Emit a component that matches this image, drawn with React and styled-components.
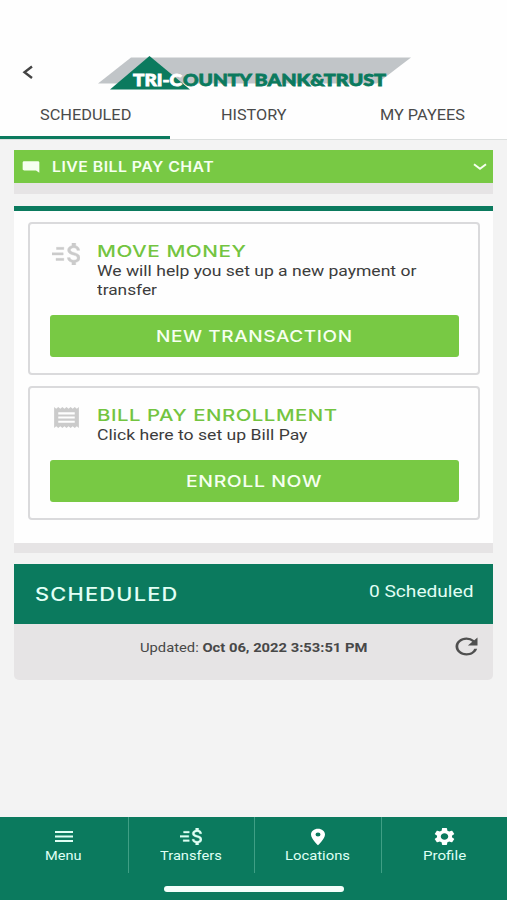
import React, { useLayoutEffect, useRef, useState } from 'react';
import styled, { createGlobalStyle } from 'styled-components';
import {
  MdModeComment,
  MdPlace,
  MdReceipt,
  MdRefresh,
  MdSettings,
} from 'react-icons/md';

const green = '#78c944';
const darkGreen = '#0b7a5e';
const grey = '#e6e4e5';

const GlobalStyle = createGlobalStyle`
  * {
    box-sizing: border-box;
  }

  body {
    margin: 0;
    background: #f3f3f3;
    color: #3c3c3c;
    font-family: Roboto, 'Liberation Sans', sans-serif;
  }
`;

const Screen = styled.div`
  display: flex;
  flex-direction: column;
  height: 900px;
  overflow: hidden;
`;

const WideBox = styled.span`
  display: block;
  flex: none;
  width: ${(props) => props.$width}px;
  text-align: left;
  white-space: nowrap;
`;

const WideInner = styled.span`
  display: inline-block;
  vertical-align: top;
  transform-origin: 0 50%;
`;

const IconBox = styled.span`
  display: block;
  flex: none;
  width: ${(props) => props.$width}px;
  height: ${(props) => props.$height}px;

  > svg {
    display: block;
    width: 100%;
    height: 100%;
  }
`;

const Header = styled.header`
  height: 140px;
  background: #fefefe;
  border-bottom: 1px solid #dcdfde;
`;

const TitleBar = styled.div`
  display: flex;
  height: 91px;
  padding: 55px 0 0 22px;
`;

const BackButton = styled.button`
  display: block;
  width: 76px;
  height: 34px;
  padding: 0;
  border: 0;
  background: none;
  text-align: left;
`;

const Tabs = styled.nav`
  display: grid;
  grid-template-columns: 170px 1fr 169px;
  height: 48px;
`;

const Tab = styled.a`
  display: flex;
  justify-content: center;
  padding-top: 14px;
  border-bottom: 3px solid
    ${(props) => (props.$active ? darkGreen : 'transparent')};
  font-size: 14px;
  line-height: 20px;
  color: #4a4a4a;
`;

const Content = styled.main`
  flex: 1;
  padding: 10px 14px 0;
`;

const ChatBar = styled.div`
  display: flex;
  align-items: center;
  height: 33px;
  padding: 0 6px 0 7px;
  background: ${green};
  color: #f6fff0;
  font-family: Inter, sans-serif;
  font-size: 14px;
  font-weight: 600;
  letter-spacing: 0.4px;
  line-height: 20px;
`;

const ChatLabel = styled.div`
  flex: 1;
  padding-left: 11px;
`;

const Strip = styled.div`
  height: ${(props) => props.$height}px;
  background: ${grey};
`;

const Panel = styled.section`
  margin-top: 12px;
  height: 337px;
  padding: 11px 13px 0 14px;
  border-top: 5px solid ${darkGreen};
  background: #fefefe;
`;

const Card = styled.article`
  height: ${(props) => props.$height}px;
  margin-bottom: 11px;
  padding: 17px 19.5px 0;
  border: 2px solid #dadadc;
  border-radius: 4px;
`;

const CardHead = styled.div`
  display: flex;
  height: ${(props) => props.$height}px;
`;

const CardIcon = styled.div`
  width: 47.5px;
  padding: ${(props) => props.$top}px 0 0 ${(props) => props.$inset}px;
  color: #cbcbcb;
`;

const CardTitle = styled.h2`
  margin: 0;
  font-family: Inter, sans-serif;
  font-size: 16px;
  font-weight: 500;
  letter-spacing: 0.4px;
  line-height: 20px;
  color: #73c440;
`;

const CardText = styled.p`
  margin: 1px 0 0;
  font-size: 15px;
  line-height: 18.5px;
`;

const CardButton = styled.button`
  display: flex;
  align-items: center;
  justify-content: center;
  width: 409px;
  height: 42px;
  padding: 0;
  border: 0;
  border-radius: 3px;
  background: ${green};
  color: #f6fff0;
  font-family: Inter, sans-serif;
  font-size: 16px;
  font-weight: 550;
  letter-spacing: 0.5px;
`;

const ScheduledHeader = styled.div`
  display: flex;
  justify-content: space-between;
  height: 60px;
  margin-top: 11px;
  padding: 18px 20px 0 21px;
  background: ${darkGreen};
  color: #e2fff5;
  font-size: 16px;
  line-height: 20px;
`;

const ScheduledTitle = styled.h2`
  margin: 3px 0 0;
  font-family: Inter, sans-serif;
  font-size: 18px;
  font-weight: 500;
  letter-spacing: 1px;
  line-height: 20px;
`;

const UpdatedRow = styled.div`
  display: flex;
  justify-content: space-between;
  height: 56px;
  padding: 9px 10px 0 126px;
  border-radius: 0 0 5px 5px;
  background: ${grey};
  font-size: 13px;
  line-height: 30px;
  color: #484848;
`;

const BottomBar = styled.footer`
  height: 83px;
  background: ${darkGreen};
  color: #dffff4;
`;

const NavItems = styled.nav`
  display: grid;
  grid-template-columns: 128.5px 126.5px 126.5px 1fr;
  height: 56px;
`;

const NavItem = styled.a`
  display: flex;
  flex-direction: column;
  align-items: center;
  padding-top: 9px;
  border-right: 1px solid #3f9f85;
  font-size: 13px;
  line-height: 17px;

  &:last-child {
    border-right: 0;
  }
`;

const NavIcon = styled.div`
  display: flex;
  align-items: center;
  justify-content: center;
  height: 21px;
`;

const HomeIndicator = styled.div`
  width: 180px;
  height: 6px;
  margin: 13px auto 0;
  border-radius: 3px;
  background: #f4fffb;
`;

// Widens its text to the given width without changing the letter height
const Wide = ({ width, children }) => {
  const ref = useRef(null);
  const [scale, setScale] = useState(1);

  useLayoutEffect(() => {
    setScale(width / ref.current.offsetWidth);
  }, [width]);

  return (
    <WideBox $width={width}>
      <WideInner ref={ref} style={{ transform: `scaleX(${scale})` }}>
        {children}
      </WideInner>
    </WideBox>
  );
};

const Icon = ({ as: Glyph, width, height, color }) => (
  <IconBox $width={width} $height={height}>
    <Glyph preserveAspectRatio="none" color={color} />
  </IconBox>
);

const Logo = () => (
  <svg width="314" height="36" viewBox="98 55 314 36">
    <path d="M98 83.5 131 57.5H411L377 83.5Z" fill="#c1c5c8" />
    <path d="M149.5 56 190 89.5H110Z" fill={darkGreen} />
    <g
      fontFamily="Lato, sans-serif"
      fontWeight="900"
      fontSize="17"
      strokeWidth="0.8"
    >
      <text
        x="133"
        y="86"
        textLength="49"
        lengthAdjust="spacingAndGlyphs"
        fill="#fff"
        stroke="#fff"
      >
        TRI-C
      </text>
      <text
        x="183"
        y="86"
        textLength="69"
        lengthAdjust="spacingAndGlyphs"
        fill={darkGreen}
        stroke={darkGreen}
      >
        OUNTY
      </text>
      <text
        x="254.5"
        y="86"
        textLength="131.5"
        lengthAdjust="spacingAndGlyphs"
        fill={darkGreen}
        stroke={darkGreen}
      >
        BANK&amp;TRUST
      </text>
    </g>
  </svg>
);

const BackIcon = () => (
  <svg width="12" height="34" viewBox="0 0 12 34">
    <path d="M10 11.5 2.5 17.3 10 23" fill="none" stroke="#444" strokeWidth="2.4" />
  </svg>
);

const ChevronDown = () => (
  <svg width="14" height="8" viewBox="0 0 14 8">
    <path d="M1 1.3 7 5.8 13 1.3" fill="none" stroke="currentColor" strokeWidth="2" />
  </svg>
);

const MoneyIcon = ({ preserveAspectRatio }) => (
  <svg
    viewBox="0 0 28 22"
    preserveAspectRatio={preserveAspectRatio}
    fill="currentColor"
    stroke="currentColor"
    strokeWidth="0.4"
  >
    <path d="M4.5 4.3h7.3v2.2H4.5zM0 9.8h11.2V12H0zM4 15.3h7.8v2.2H4z" />
    <path
      transform="translate(7.62 -3.66) scale(1.235 1.22)"
      d="M11.8 10.9c-2.27-.59-3-1.2-3-2.15 0-1.09 1.01-1.85 2.7-1.85 1.78 0 2.44.85 2.5 2.1h2.21c-.07-1.72-1.12-3.3-3.21-3.81V3h-3v2.16c-1.94.42-3.5 1.68-3.5 3.61 0 2.31 1.91 3.46 4.7 4.13 2.5.6 3 1.48 3 2.41 0 .69-.49 1.79-2.7 1.79-2.06 0-2.87-.92-2.98-2.1h-2.2c.12 2.19 1.76 3.42 3.68 3.83V21h3v-2.15c1.95-.37 3.5-1.5 3.5-3.55 0-2.84-2.43-3.81-4.7-4.4z"
    />
  </svg>
);

const MenuIcon = () => (
  <svg viewBox="0 0 18 12" fill="currentColor">
    <path d="M0 0h18v2H0zM0 4.5h18v2H0zM0 9h18v2H0z" />
  </svg>
);

const tabs = [
  { label: 'SCHEDULED', width: 91, active: true },
  { label: 'HISTORY', width: 66 },
  { label: 'MY PAYEES', width: 85 },
];

const navItems = [
  {
    label: 'Menu',
    width: 37,
    icon: <Icon as={MenuIcon} width={18} height={12} />,
  },
  {
    label: 'Transfers',
    width: 62,
    icon: <Icon as={MoneyIcon} width={22} height={17} />,
  },
  {
    label: 'Locations',
    width: 65,
    icon: <Icon as={MdPlace} width={24} height={20} color="#fff" />,
  },
  {
    label: 'Profile',
    width: 43,
    icon: <Icon as={MdSettings} width={25} height={21} color="#fff" />,
  },
];

const App = () => (
  <Screen>
    <GlobalStyle />
    <Header>
      <TitleBar>
        <BackButton type="button" aria-label="Back">
          <BackIcon />
        </BackButton>
        <Logo />
      </TitleBar>
      <Tabs>
        {tabs.map((tab) => (
          <Tab key={tab.label} $active={tab.active}>
            <Wide width={tab.width}>{tab.label}</Wide>
          </Tab>
        ))}
      </Tabs>
    </Header>

    <Content>
      <ChatBar>
        <Icon as={MdModeComment} width={20} height={14} />
        <ChatLabel>
          <Wide width={162}>LIVE BILL PAY CHAT</Wide>
        </ChatLabel>
        <ChevronDown />
      </ChatBar>
      <Strip $height={11} />

      <Panel>
        <Card $height={153}>
          <CardHead $height={74}>
            <CardIcon $top={2} $inset={2.5}>
              <Icon as={MoneyIcon} width={28} height={22} />
            </CardIcon>
            <div>
              <CardTitle>
                <Wide width={149}>MOVE MONEY</Wide>
              </CardTitle>
              <CardText>
                <Wide width={319}>We will help you set up a new payment or</Wide>
                <Wide width={60}>transfer</Wide>
              </CardText>
            </div>
          </CardHead>
          <CardButton type="button">
            <Wide width={197}>NEW TRANSACTION</Wide>
          </CardButton>
        </Card>
        <Card $height={134}>
          <CardHead $height={55}>
            <CardIcon $top={0} $inset={0}>
              <Icon as={MdReceipt} width={33} height={25} />
            </CardIcon>
            <div>
              <CardTitle>
                <Wide width={241}>BILL PAY ENROLLMENT</Wide>
              </CardTitle>
              <CardText>
                <Wide width={210}>Click here to set up Bill Pay</Wide>
              </CardText>
            </div>
          </CardHead>
          <CardButton type="button">
            <Wide width={136}>ENROLL NOW</Wide>
          </CardButton>
        </Card>
      </Panel>
      <Strip $height={10} />

      <ScheduledHeader>
        <ScheduledTitle>
          <Wide width={143}>SCHEDULED</Wide>
        </ScheduledTitle>
        <Wide width={104}>0 Scheduled</Wide>
      </ScheduledHeader>
      <UpdatedRow>
        <Wide width={227}>
          Updated: <b>Oct 06, 2022 3:53:51 PM</b>
        </Wide>
        <Icon as={MdRefresh} width={33} height={27} color="#4f4f4f" />
      </UpdatedRow>
    </Content>

    <BottomBar>
      <NavItems>
        {navItems.map((item) => (
          <NavItem key={item.label}>
            <NavIcon>{item.icon}</NavIcon>
            <Wide width={item.width}>{item.label}</Wide>
          </NavItem>
        ))}
      </NavItems>
      <HomeIndicator />
    </BottomBar>
  </Screen>
);

export default App;
